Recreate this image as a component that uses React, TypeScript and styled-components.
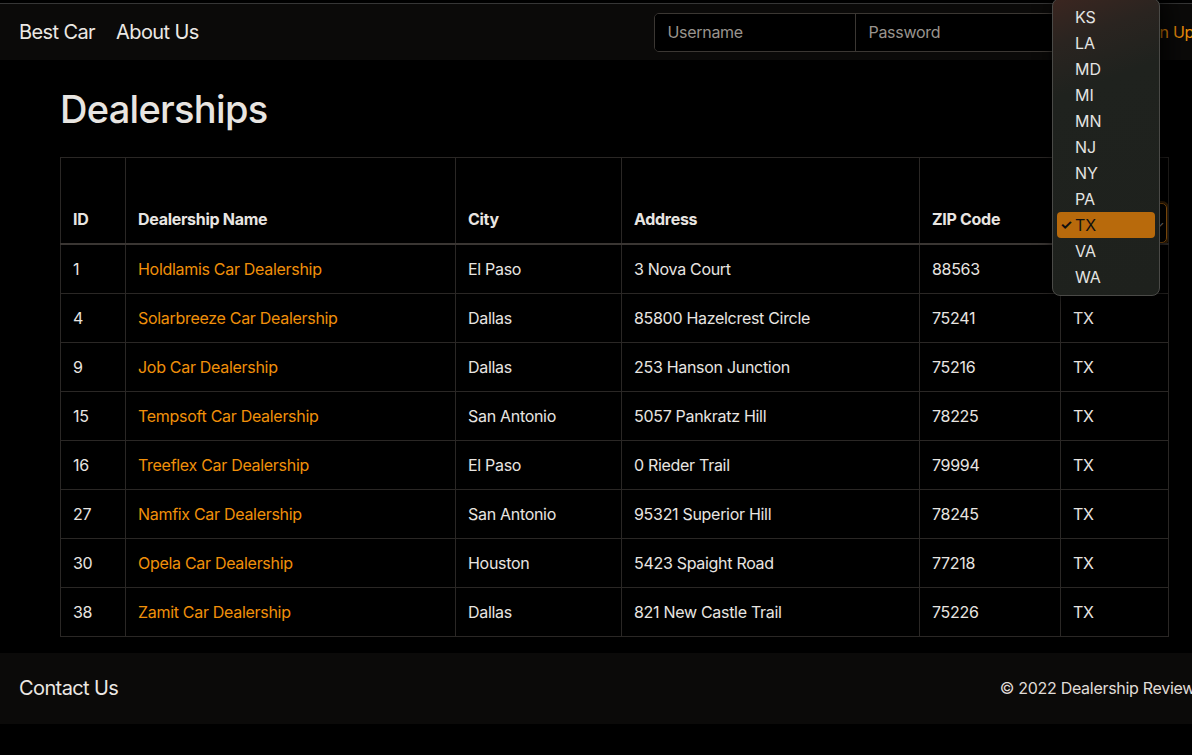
import React from "react";
import styled, { createGlobalStyle } from "styled-components";

const Global = createGlobalStyle`
  html, body { margin: 0; padding: 0; background: #000; }
  body { font-family: Inter, "Noto Sans", "Liberation Sans", sans-serif; color: #e8e5e1; overflow: hidden; letter-spacing: -0.3px; }
  #root { width: 1192px; height: 755px; overflow: hidden; position: relative; }
`;

const Page = styled.div`
  width: 1192px;
  min-height: 755px;
  background: #000;
  padding-top: 3px;
  position: relative;
`;

const Navbar = styled.nav`
  display: flex;
  align-items: center;
  height: 56px;
  border-top: 1px solid #363636;
  background: #0b0a09;
  padding-left: 19px;
  white-space: nowrap;
`;

const NavLink = styled.a`
  font-size: 20px;
  letter-spacing: -0.6px;
  color: #ebe8e4;
  text-decoration: none;
  margin-right: 21px;
`;

const RightGroup = styled.div`
  display: flex;
  align-items: center;
  margin-left: auto;
  margin-right: -2px;
  flex-shrink: 0;
`;

const InputGroup = styled.div`
  display: flex;
  height: 37px;
  border: 1px solid #3b3733;
  border-radius: 5px;
  overflow: hidden;
`;

const Field = styled.input<{ $divider?: boolean }>`
  width: 200px;
  box-sizing: border-box;
  height: 100%;
  background: #000;
  border: none;
  border-left: ${(p) => (p.$divider ? "1px solid #3b3733" : "none")};
  padding: 0 12px;
  font-family: inherit;
  font-size: 16px;
  letter-spacing: -0.3px;
  color: #e8e5e1;
  outline: none;
  &::placeholder { color: #99948e; }
`;

const LoginBtn = styled.button`
  margin-left: 8px;
  width: 58px;
  height: 37px;
  padding: 0;
  background: #000;
  color: #e8e5e1;
  border: 1px solid #3b3733;
  border-radius: 5px;
  font-family: inherit;
  font-size: 16px;
`;

const SignUp = styled.a`
  margin-left: 14px;
  color: #f0900a;
  font-size: 16px;
  text-decoration: none;
`;

const Main = styled.main`
  padding: 26px 24px 16px 60px;
`;

const Title = styled.h1`
  margin: 0 0 25px;
  font-size: 38px;
  font-weight: 500;
  letter-spacing: -0.7px;
  line-height: 46px;
  color: #e8e5e1;
`;

const Table = styled.table`
  width: 1108px;
  table-layout: fixed;
  border-collapse: collapse;
  font-size: 16px;
`;

const HeadCell = styled.th<{ $flush?: boolean }>`
  height: 86px;
  box-sizing: border-box;
  text-align: left;
  vertical-align: bottom;
  font-weight: 700;
  color: #e8e5e1;
  padding: ${(p) => (p.$flush ? "0 1px 0 2px" : "12px")};
  border: 1px solid #2a2725;
  border-bottom: 2px solid #3a3633;
  line-height: 24px;
`;

const Cell = styled.td`
  padding: 12px;
  line-height: 24px;
  border: 1px solid #2a2725;
  color: #e8e5e1;
  white-space: nowrap;
`;

const DealerLink = styled.a`
  color: #f0900a;
  text-decoration: none;
`;

const StateSelect = styled.div`
  height: 40px;
  box-sizing: border-box;
  border: 1px solid #c27315;
  border-radius: 5px;
  box-shadow: 0 0 0 2px rgba(194, 115, 21, 0.35);
  display: flex;
  align-items: center;
  justify-content: flex-end;
  padding-right: 2px;
  color: #cfcac4;
  font-size: 12px;
  font-weight: 400;
`;

const Footer = styled.footer`
  display: flex;
  align-items: center;
  justify-content: space-between;
  height: 71px;
  background: #0b0a09;
  padding-left: 19px;
  margin-right: -3px;
  white-space: nowrap;
`;

const FooterTitle = styled.span`
  font-size: 20px;
  letter-spacing: -0.6px;
  color: #ebe8e4;
`;

const Copyright = styled.span`
  font-size: 16px;
  color: #e0ddd8;
`;

const Dropdown = styled.ul`
  position: absolute;
  left: 1052px;
  top: -2px;
  width: 108px;
  box-sizing: border-box;
  margin: 0;
  padding: 5px 4px;
  list-style: none;
  border: 1px solid #4a4a47;
  border-radius: 8px;
  background: linear-gradient(160deg, #3b2620 0%, #2a2420 14%, #1f221e 30%, #1e211d 100%);
  box-shadow: 8px 0 24px rgba(0, 0, 0, 0.7), 0 2px 8px rgba(0, 0, 0, 0.4);
  z-index: 10;
`;

const Option = styled.li<{ $selected?: boolean }>`
  position: relative;
  height: 26px;
  line-height: 26px;
  padding-left: 18px;
  border-radius: 4px;
  font-size: 16px;
  letter-spacing: 0;
  color: ${(p) => (p.$selected ? "#101010" : "#e4e4e2")};
  background: ${(p) => (p.$selected ? "#b86a0c" : "transparent")};
`;

const Check = styled.span`
  position: absolute;
  left: 3px;
  top: 0;
  font-size: 14px;
  font-weight: 700;
  color: #101010;
`;

const dealers = [
  { id: 1, name: "Holdlamis Car Dealership", city: "El Paso", address: "3 Nova Court", zip: "88563", st: "TX" },
  { id: 4, name: "Solarbreeze Car Dealership", city: "Dallas", address: "85800 Hazelcrest Circle", zip: "75241", st: "TX" },
  { id: 9, name: "Job Car Dealership", city: "Dallas", address: "253 Hanson Junction", zip: "75216", st: "TX" },
  { id: 15, name: "Tempsoft Car Dealership", city: "San Antonio", address: "5057 Pankratz Hill", zip: "78225", st: "TX" },
  { id: 16, name: "Treeflex Car Dealership", city: "El Paso", address: "0 Rieder Trail", zip: "79994", st: "TX" },
  { id: 27, name: "Namfix Car Dealership", city: "San Antonio", address: "95321 Superior Hill", zip: "78245", st: "TX" },
  { id: 30, name: "Opela Car Dealership", city: "Houston", address: "5423 Spaight Road", zip: "77218", st: "TX" },
  { id: 38, name: "Zamit Car Dealership", city: "Dallas", address: "821 New Castle Trail", zip: "75226", st: "TX" },
];

const states = ["KS", "LA", "MD", "MI", "MN", "NJ", "NY", "PA", "TX", "VA", "WA"];

export default function App() {
  return (
    <Page>
      <Global />
      <Navbar>
        <NavLink href="#">Best Car</NavLink>
        <NavLink href="#">About Us</NavLink>
        <RightGroup>
          <InputGroup>
            <Field placeholder="Username" />
            <Field $divider placeholder="Password" type="password" />
          </InputGroup>
          <LoginBtn>Login</LoginBtn>
          <SignUp href="#">Sign Up</SignUp>
        </RightGroup>
      </Navbar>
      <Main>
        <Title>Dealerships</Title>
        <Table>
          <colgroup>
            <col style={{ width: 65 }} />
            <col style={{ width: 330 }} />
            <col style={{ width: 166 }} />
            <col style={{ width: 298 }} />
            <col style={{ width: 141 }} />
            <col style={{ width: 108 }} />
          </colgroup>
          <thead>
            <tr>
              <HeadCell>ID</HeadCell>
              <HeadCell>Dealership Name</HeadCell>
              <HeadCell>City</HeadCell>
              <HeadCell>Address</HeadCell>
              <HeadCell>ZIP Code</HeadCell>
              <HeadCell $flush>
                <StateSelect>⌄</StateSelect>
              </HeadCell>
            </tr>
          </thead>
          <tbody>
            {dealers.map((d) => (
              <tr key={d.id}>
                <Cell>{d.id}</Cell>
                <Cell>
                  <DealerLink href="#">{d.name}</DealerLink>
                </Cell>
                <Cell>{d.city}</Cell>
                <Cell>{d.address}</Cell>
                <Cell>{d.zip}</Cell>
                <Cell>{d.st}</Cell>
              </tr>
            ))}
          </tbody>
        </Table>
      </Main>
      <Footer>
        <FooterTitle>Contact Us</FooterTitle>
        <Copyright>© 2022 Dealership Review</Copyright>
      </Footer>
      <Dropdown>
        {states.map((s) => (
          <Option key={s} $selected={s === "TX"}>
            {s === "TX" && <Check>✓</Check>}
            {s}
          </Option>
        ))}
      </Dropdown>
    </Page>
  );
}
